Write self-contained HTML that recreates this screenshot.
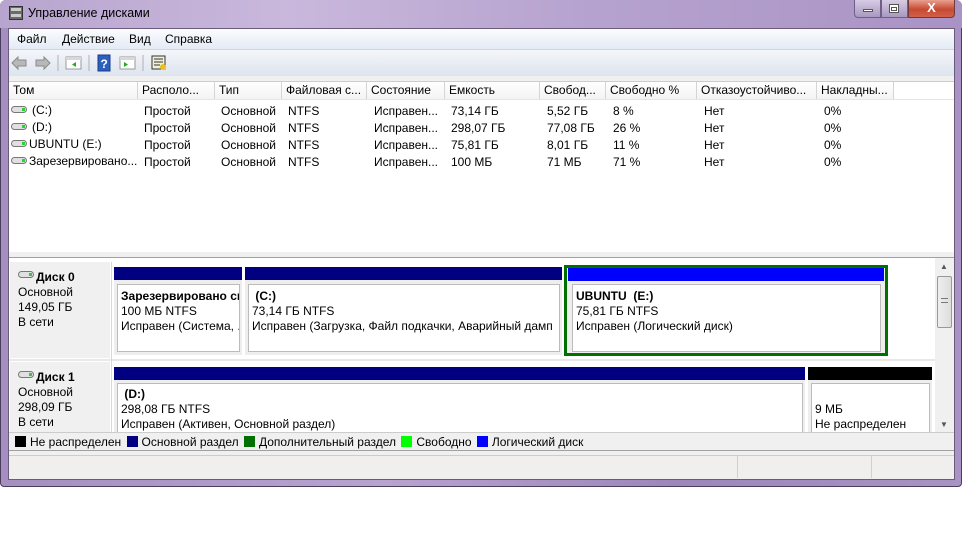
<!DOCTYPE html>
<html><head><meta charset="utf-8"><style>
*{margin:0;padding:0;box-sizing:border-box}
body{width:964px;height:540px;background:#fff;position:relative;overflow:hidden;font-family:"Liberation Sans",sans-serif;font-size:12px;color:#000}
.a{position:absolute}
.t{position:absolute;white-space:nowrap;font-size:12px;line-height:14px}
.hdr{position:absolute;top:82px;height:18px;border-right:1px solid #d5d5d5;background:linear-gradient(#fff,#f3f3f3);padding-left:4px;line-height:17px;white-space:nowrap;overflow:hidden}
.sq{display:inline-block;width:11px;height:11px;vertical-align:-1px;margin-right:4px;margin-left:2px}
</style></head><body>
<!-- window frame -->
<div class="a" style="left:0;top:0;width:962px;height:487px;background:linear-gradient(90deg,#a58fc0,#b8a2d0 40%,#9d86ba 70%,#a893c4);border:1px solid #4a3c5c;border-radius:6px 6px 4px 4px"></div>
<div class="a" style="left:0;top:0;width:962px;height:28px;background:linear-gradient(90deg,#b8a5cf,#c9b8dc 30%,#b7a3cf 60%,#a993c5);border-radius:6px 6px 0 0"></div>
<!-- title icon -->
<div class="a" style="left:9px;top:6px;width:14px;height:14px;background:#6a6a6a;border:1px solid #333"></div>
<div class="a" style="left:11px;top:8px;width:10px;height:3px;background:#ccc"></div>
<div class="a" style="left:11px;top:14px;width:10px;height:3px;background:#ccc"></div>
<div class="t" style="left:28px;top:6px;font-size:12.5px">Управление дисками</div>
<!-- caption buttons -->
<div class="a" style="left:854px;top:0;width:27px;height:18px;background:linear-gradient(#d6cce4,#a898c0);border:1px solid #6f5f88;border-top:none;border-radius:0 0 0 4px"></div>
<div class="a" style="left:863px;top:9px;width:10px;height:3px;background:#fff;border:1px solid #555"></div>
<div class="a" style="left:881px;top:0;width:27px;height:18px;background:linear-gradient(#d6cce4,#a898c0);border:1px solid #6f5f88;border-top:none"></div>
<div class="a" style="left:889px;top:4px;width:10px;height:9px;border:1px solid #555;background:#fff"></div>
<div class="a" style="left:891px;top:7px;width:6px;height:4px;border:1px solid #555"></div>
<div class="a" style="left:908px;top:0;width:47px;height:18px;background:linear-gradient(#e8a090,#c84a32 55%,#d0604a);border:1px solid #6f3a3a;border-top:none;border-radius:0 0 4px 0;color:#fff;text-align:center;font-weight:bold;font-size:13px;line-height:16px">X</div>
<!-- client -->
<div class="a" style="left:8px;top:28px;width:947px;height:452px;background:#f0f0f0;border:1px solid #6a5a7c"></div>
<div class="a" style="left:9px;top:29px;width:945px;height:20px;background:linear-gradient(#fbfcfe,#e4ebf5)"></div>
<div class="t" style="left:17px;top:32px">Файл</div>
<div class="t" style="left:62px;top:32px">Действие</div>
<div class="t" style="left:129px;top:32px">Вид</div>
<div class="t" style="left:165px;top:32px">Справка</div>
<div class="a" style="left:9px;top:49px;width:945px;height:27px;background:linear-gradient(#f4f6fa,#dde4ee);border-top:1px solid #cfd6e0"></div>
<!-- toolbar icons -->
<svg class="a" style="left:10px;top:54px" width="160" height="18">
<path d="M2 9 L8 3 L8 6 L16 6 L16 12 L8 12 L8 15 Z" fill="#b8b8b8" stroke="#8a8a8a"/>
<path d="M40 9 L34 3 L34 6 L26 6 L26 12 L34 12 L34 15 Z" fill="#b8b8b8" stroke="#8a8a8a"/>
<line x1="48" y1="1" x2="48" y2="17" stroke="#b0b0b0"/>
<rect x="56" y="3" width="15" height="12" fill="#fff" stroke="#999"/><rect x="56" y="3" width="15" height="3" fill="#d8d8d8"/><path d="M66 8 L62 10.5 L66 13Z" fill="#2a2"/>
<line x1="79" y1="1" x2="79" y2="17" stroke="#b0b0b0"/>
<rect x="88" y="1" width="12" height="16" fill="#2d5fbf" stroke="#1a3d8a"/><text x="90.5" y="14" font-size="12" fill="#fff" font-family="Liberation Sans" font-weight="bold">?</text>
<rect x="110" y="3" width="15" height="12" fill="#fff" stroke="#999"/><rect x="110" y="3" width="15" height="3" fill="#d8d8d8"/><path d="M114 8 L118 10.5 L114 13Z" fill="#2a2"/>
<line x1="133" y1="1" x2="133" y2="17" stroke="#b0b0b0"/>
<rect x="142" y="2" width="13" height="13" fill="#f4f0d8" stroke="#333"/><path d="M144 5h9M144 8h9M144 11h6" stroke="#333"/><circle cx="153" cy="13" r="3" fill="#e8c020"/>
</svg>
<!-- list -->
<div class="a" style="left:9px;top:81px;width:945px;height:171px;background:#fff;border-top:1px solid #ccc"></div>
<div class="hdr" style="left:9px;width:129px">Том</div>
<div class="hdr" style="left:138px;width:77px">Располо...</div>
<div class="hdr" style="left:215px;width:67px">Тип</div>
<div class="hdr" style="left:282px;width:85px">Файловая с...</div>
<div class="hdr" style="left:367px;width:78px">Состояние</div>
<div class="hdr" style="left:445px;width:95px">Емкость</div>
<div class="hdr" style="left:540px;width:66px">Свобод...</div>
<div class="hdr" style="left:606px;width:91px">Свободно %</div>
<div class="hdr" style="left:697px;width:120px">Отказоустойчиво...</div>
<div class="hdr" style="left:817px;width:77px">Накладны...</div>
<div class="a" style="left:9px;top:99px;width:945px;height:1px;background:#e5e5e5"></div>
<svg class="a" style="left:11px;top:104px" width="18" height="60">
<g fill="#e0e0e0" stroke="#777"><rect x="0.5" y="2.5" width="15" height="6" rx="3"/><rect x="0.5" y="19.5" width="15" height="6" rx="3"/><rect x="0.5" y="36.5" width="15" height="6" rx="3"/><rect x="0.5" y="53.5" width="15" height="6" rx="3"/></g>
<g fill="#3c3"><rect x="11" y="4" width="3" height="3"/><rect x="11" y="21" width="3" height="3"/><rect x="11" y="38" width="3" height="3"/><rect x="11" y="55" width="3" height="3"/></g>
</svg>
<div class="t" style="left:32px;top:103px">(C:)</div>
<div class="t" style="left:32px;top:120px">(D:)</div>
<div class="t" style="left:29px;top:137px">UBUNTU (E:)</div>
<div class="t" style="left:29px;top:154px">Зарезервировано...</div>
<div class="t" style="left:144px;top:103px;line-height:17px">Простой<br>Простой<br>Простой<br>Простой</div>
<div class="t" style="left:221px;top:103px;line-height:17px">Основной<br>Основной<br>Основной<br>Основной</div>
<div class="t" style="left:288px;top:103px;line-height:17px">NTFS<br>NTFS<br>NTFS<br>NTFS</div>
<div class="t" style="left:374px;top:103px;line-height:17px">Исправен...<br>Исправен...<br>Исправен...<br>Исправен...</div>
<div class="t" style="left:451px;top:103px;line-height:17px">73,14 ГБ<br>298,07 ГБ<br>75,81 ГБ<br>100 МБ</div>
<div class="t" style="left:547px;top:103px;line-height:17px">5,52 ГБ<br>77,08 ГБ<br>8,01 ГБ<br>71 МБ</div>
<div class="t" style="left:613px;top:103px;line-height:17px">8 %<br>26 %<br>11 %<br>71 %</div>
<div class="t" style="left:704px;top:103px;line-height:17px">Нет<br>Нет<br>Нет<br>Нет</div>
<div class="t" style="left:824px;top:103px;line-height:17px">0%<br>0%<br>0%<br>0%</div>
<!-- splitter -->
<div class="a" style="left:9px;top:252px;width:945px;height:6px;background:#f0f0f0;border-bottom:1px solid #a0a0a0"></div>
<!-- disk area -->
<div class="a" style="left:9px;top:258px;width:926px;height:174px;background:#fff"></div>
<div class="a" style="left:10px;top:262px;width:100px;height:96px;background:#f0f0f0"></div>
<div class="a" style="left:10px;top:362px;width:100px;height:70px;background:#f0f0f0"></div>
<div class="a" style="left:9px;top:359px;width:926px;height:2px;background:#e8e8e8"></div>
<div class="a" style="left:111px;top:262px;width:1px;height:170px;background:#d8d8d8"></div>
<svg class="a" style="left:18px;top:270px" width="18" height="110"><g fill="#e0e0e0" stroke="#777"><rect x="0.5" y="1.5" width="15" height="6" rx="3"/><rect x="0.5" y="101.5" width="15" height="6" rx="3"/></g><rect x="11" y="3" width="3" height="3" fill="#3c3"/><rect x="11" y="103" width="3" height="3" fill="#3c3"/></svg>
<div class="t" style="left:36px;top:270px;font-weight:bold">Диск 0</div>
<div class="t" style="left:18px;top:285px;line-height:15px">Основной<br>149,05 ГБ<br>В сети</div>
<div class="t" style="left:36px;top:370px;font-weight:bold">Диск 1</div>
<div class="t" style="left:18px;top:385px;line-height:15px">Основной<br>298,09 ГБ<br>В сети</div>
<!-- disk0 partitions -->
<div class="a" style="left:114px;top:267px;width:128px;height:13px;background:#000080"></div>
<div class="a" style="left:114px;top:280px;width:128px;height:75px;background:#eee"></div>
<div class="a" style="left:117px;top:284px;width:123px;height:68px;background:#fff;border:1px solid #bbb;overflow:hidden;padding:4px 0 0 3px;line-height:15px;white-space:nowrap"><b>Зарезервировано си</b><br>100 МБ NTFS<br>Исправен (Система, .</div>
<div class="a" style="left:245px;top:267px;width:317px;height:13px;background:#000080"></div>
<div class="a" style="left:245px;top:280px;width:317px;height:75px;background:#eee"></div>
<div class="a" style="left:248px;top:284px;width:312px;height:68px;background:#fff;border:1px solid #bbb;overflow:hidden;padding:4px 0 0 3px;line-height:15px;white-space:nowrap"><b>&nbsp;(C:)</b><br>73,14 ГБ NTFS<br>Исправен (Загрузка, Файл подкачки, Аварийный дамп</div>
<div class="a" style="left:564px;top:265px;width:324px;height:91px;border:3px solid #007000;background:#eee"></div>
<div class="a" style="left:568px;top:268px;width:316px;height:13px;background:#0000ff"></div>
<div class="a" style="left:572px;top:284px;width:309px;height:68px;background:#fff;border:1px solid #bbb;padding:4px 0 0 3px;line-height:15px;white-space:nowrap"><b>UBUNTU&nbsp; (E:)</b><br>75,81 ГБ NTFS<br>Исправен (Логический диск)</div>
<!-- disk1 -->
<div class="a" style="left:114px;top:367px;width:691px;height:13px;background:#000080"></div>
<div class="a" style="left:114px;top:380px;width:691px;height:52px;background:#eee"></div>
<div class="a" style="left:117px;top:383px;width:686px;height:49px;background:#fff;border:1px solid #bbb;border-bottom:none;padding:3px 0 0 3px;line-height:15px;white-space:nowrap"><b>&nbsp;(D:)</b><br>298,08 ГБ NTFS<br>Исправен (Активен, Основной раздел)</div>
<div class="a" style="left:808px;top:367px;width:124px;height:13px;background:#000"></div>
<div class="a" style="left:808px;top:380px;width:124px;height:52px;background:#eee"></div>
<div class="a" style="left:811px;top:383px;width:119px;height:49px;background:#fff;border:1px solid #bbb;border-bottom:none;padding:18px 0 0 3px;line-height:15px;white-space:nowrap">9 МБ<br>Не распределен</div>
<!-- scrollbar -->
<div class="a" style="left:935px;top:258px;width:18px;height:174px;background:#f0f0f0"></div>
<div class="t" style="left:940px;top:260px;font-size:8px;color:#555">▲</div>
<div class="a" style="left:937px;top:276px;width:15px;height:52px;background:linear-gradient(90deg,#eee,#ddd);border:1px solid #999;border-radius:2px"></div>
<div class="a" style="left:941px;top:298px;width:7px;height:5px;border-top:1px solid #777;border-bottom:1px solid #777"></div>
<div class="t" style="left:940px;top:418px;font-size:8px;color:#555">▼</div>
<!-- legend -->
<div class="a" style="left:9px;top:432px;width:945px;height:19px;background:#f0f0f0;border-top:1px solid #ccc;border-bottom:1px solid #a0a0a0"></div>
<div class="t" style="left:13px;top:435px"><span class="sq" style="background:#000"></span>Не распределен <span class="sq" style="background:#000080"></span>Основной раздел <span class="sq" style="background:#007000"></span>Дополнительный раздел <span class="sq" style="background:#00ff00"></span>Свободно <span class="sq" style="background:#0000ff"></span>Логический диск</div>
<!-- status bar -->
<div class="a" style="left:9px;top:455px;width:945px;height:24px;background:#f0efee;border-top:1px solid #ccc"></div>
<div class="a" style="left:737px;top:456px;width:1px;height:22px;background:#d0d0d0"></div>
<div class="a" style="left:871px;top:456px;width:1px;height:22px;background:#d0d0d0"></div>
</body></html>
